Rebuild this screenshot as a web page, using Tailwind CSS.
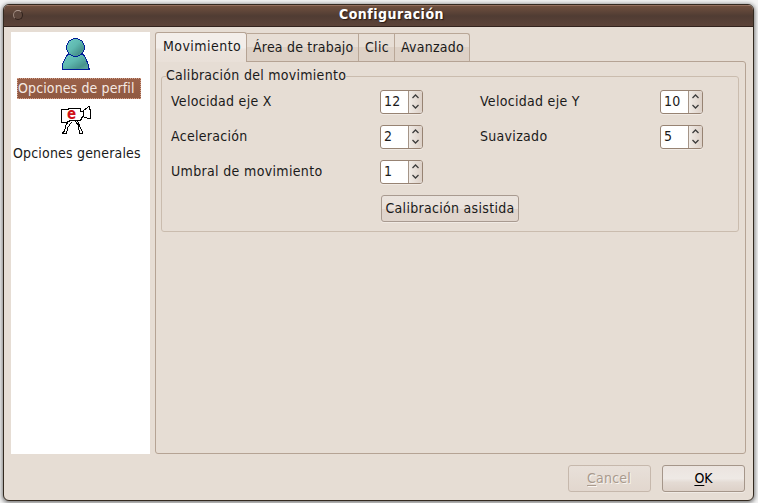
<!DOCTYPE html>
<html lang="es">
<head>
<meta charset="utf-8">
<title>Configuración</title>
<script src="https://cdn.jsdelivr.net/npm/@tailwindcss/browser@4"></script>
</head>
<body class="w-[758px] h-[503px] overflow-hidden bg-[#f4f4f4] pt-1 pl-[3px] text-[14px] leading-[16px] text-[#1a1a1a] whitespace-nowrap [font-family:'DejaVu_Sans_Condensed','DejaVu_Sans',sans-serif] [font-stretch:condensed]">
<div class="w-[751px] h-[497px] flex flex-col rounded-[6px] border border-[#33291f] bg-[#e6ddd4] overflow-hidden shadow-[0_1px_4px_1px_rgba(0,0,0,0.5)]">
  <header class="h-[22px] shrink-0 flex items-center border-t border-t-[#94705f] border-b border-b-[#33231d] bg-linear-to-b from-[#70503f] via-[#503c33] to-[#5c4338] pl-[9px]">
    <span class="size-[10px] rounded-full border border-[#30221c] border-t-[#b09c92] border-l-[#9c877c] bg-[#5c463c] -translate-y-px"></span>
    <h1 class="w-[720px] h-[21px] pl-[17px] text-center text-white font-bold tracking-[0.48px] [text-shadow:1px_1px_1px_#2b1c15]">Configuración</h1>
  </header>
  <div class="flex pl-[7px] pt-[5px] gap-[5px] h-[428px] shrink-0">
    <nav class="w-[139px] h-[422px] bg-white flex flex-col">
      <svg class="ml-[51px] mt-[5px]" width="29" height="34" viewBox="0 0 29 34" shape-rendering="crispEdges">
        <defs><linearGradient id="g" x1="0" y1="0" x2="1" y2="1"><stop offset="0" stop-color="#70cbc3"/><stop offset=".45" stop-color="#5fb9b0"/><stop offset=".75" stop-color="#47938d"/><stop offset="1" stop-color="#64aca5"/></linearGradient></defs>
        <path d="M.5 32.500V27.500L3.500 20.500L7.500 15.500H19.500L23.500 20.500L26.500 28.500V31.500H27.500V32.500Z" fill="url(#g)" stroke="#001c98"/>
        <circle cx="13.500" cy="10.500" r="9" fill="url(#g)" stroke="#001c98"/>
      </svg>
      <div class="ml-[6px] mt-[7px] w-[124px] h-[21px] bg-linear-to-b from-[#9b6149] to-[#8f5942] border border-dotted border-[#d5a28c] text-[#f5e9e2] pt-px tracking-[0.12px]"><span>Opciones de perfil</span></div>
      <svg class="ml-[49px] mt-[5px]" width="32" height="32" viewBox="0 0 32 32" shape-rendering="crispEdges" fill="none" stroke="#000">
        <path d="M1.500 5.500H8.500V4.500H20.500V7.500H22.500L28.500 2.500H29.500V5.500H30.500V14.500H28.500L22.500 12.500L20.500 16.500H9.500V17.500H7.500V18.500H1.500Z"/>
        <path d="M23.500 7V12M8.500 17L5.500 22L4.500 27.500L2.500 28.500V29.500H6.500L7.500 24L11.500 18M15.500 17L18.500 22L19.500 29.500H22.500V27.500L20.500 24L17.500 17"/>
        <text x="7" y="15" fill="#d01018" stroke="none" class="text-[15px] font-bold">e</text>
      </svg>
      <span class="ml-[2px] mt-[9px] tracking-[0.18px]">Opciones generales</span>
    </nav>
    <main class="w-[591px]">
      <div class="flex items-end h-[29px]">
        <span class="w-[92px] h-[30px] relative z-10 -mb-px pl-[7px] pt-[5px] border border-b-0 border-[#b5a394] rounded-t-[3px] bg-[linear-gradient(#f3eeea_0_50%,#eae2db_60%,#e9e0d8)] tracking-[0.45px]">Movimiento</span>
        <span class="w-[112px] h-[28px] pl-[6px] pt-[5px] border-t border-r border-[#b9a797] bg-[linear-gradient(#e7ded5_0_50%,#ddd1c6_50%)] tracking-[0.2px]">Área de trabajo</span>
        <span class="w-[36px] h-[28px] pl-[6px] pt-[5px] border-t border-r border-[#b9a797] bg-[linear-gradient(#e7ded5_0_50%,#ddd1c6_50%)] tracking-[0.3px]">Clic</span>
        <span class="w-[75px] h-[28px] pl-[6px] pt-[5px] border-t border-r border-[#b9a797] rounded-tr-[3px] bg-[linear-gradient(#e7ded5_0_50%,#ddd1c6_50%)] tracking-[0.25px]">Avanzado</span>
      </div>
      <section class="w-[591px] h-[393px] border border-[#b5a394] rounded-b-[3px] rounded-tr-[3px] pl-[5px] pt-[5px]">
        <h2 class="h-[9px] pl-[5px] tracking-[0.28px]"><span class="relative z-10 bg-[#e6ddd4]">Calibración del movimiento</span></h2>
        <div class="w-[578px] h-[156px] border border-[#cabcae] rounded-[3px] pl-[9px] pt-[13px]">
          <div class="grid grid-cols-[209px_100px_180px_43px] gap-y-[11px] items-center [&>span]:-mt-[2px] tracking-[0.3px]">
            <span>Velocidad eje X</span>
            <div class="w-[43px] h-[24px] flex rounded-[3px] border border-[#978373] bg-white shadow-[0_1px_0_#f0eae4]"><span class="w-[28px] pl-[3px] pt-[2px]">12</span><i class="w-[14px] h-[22px] border-l border-[#a59588] bg-linear-to-r from-[#f0ebe6] to-[#dcd0c7] rounded-r-[2px]"><svg width="13" height="22" viewBox="0 0 13 22" fill="none" stroke="#3c3c3c" stroke-width="1.300"><path d="M3.500 7L6.500 4L9.500 7M3.500 14L6.500 17L9.500 14"/></svg></i></div>
            <span>Velocidad eje Y</span>
            <div class="w-[43px] h-[24px] flex rounded-[3px] border border-[#978373] bg-white shadow-[0_1px_0_#f0eae4]"><span class="w-[28px] pl-[3px] pt-[2px]">10</span><i class="w-[14px] h-[22px] border-l border-[#a59588] bg-linear-to-r from-[#f0ebe6] to-[#dcd0c7] rounded-r-[2px]"><svg width="13" height="22" viewBox="0 0 13 22" fill="none" stroke="#3c3c3c" stroke-width="1.300"><path d="M3.500 7L6.500 4L9.500 7M3.500 14L6.500 17L9.500 14"/></svg></i></div>
            <span>Aceleración</span>
            <div class="w-[43px] h-[24px] flex rounded-[3px] border border-[#978373] bg-white shadow-[0_1px_0_#f0eae4]"><span class="w-[28px] pl-[3px] pt-[2px]">2</span><i class="w-[14px] h-[22px] border-l border-[#a59588] bg-linear-to-r from-[#f0ebe6] to-[#dcd0c7] rounded-r-[2px]"><svg width="13" height="22" viewBox="0 0 13 22" fill="none" stroke="#3c3c3c" stroke-width="1.300"><path d="M3.500 7L6.500 4L9.500 7M3.500 14L6.500 17L9.500 14"/></svg></i></div>
            <span>Suavizado</span>
            <div class="w-[43px] h-[24px] flex rounded-[3px] border border-[#978373] bg-white shadow-[0_1px_0_#f0eae4]"><span class="w-[28px] pl-[3px] pt-[2px]">5</span><i class="w-[14px] h-[22px] border-l border-[#a59588] bg-linear-to-r from-[#f0ebe6] to-[#dcd0c7] rounded-r-[2px]"><svg width="13" height="22" viewBox="0 0 13 22" fill="none" stroke="#3c3c3c" stroke-width="1.300"><path d="M3.500 7L6.500 4L9.500 7M3.500 14L6.500 17L9.500 14"/></svg></i></div>
            <span class="tracking-[0.34px]">Umbral de movimiento</span>
            <div class="w-[43px] h-[24px] flex rounded-[3px] border border-[#978373] bg-white shadow-[0_1px_0_#f0eae4]"><span class="w-[28px] pl-[3px] pt-[2px]">1</span><i class="w-[14px] h-[22px] border-l border-[#a59588] bg-linear-to-r from-[#f0ebe6] to-[#dcd0c7] rounded-r-[2px]"><svg width="13" height="22" viewBox="0 0 13 22" fill="none" stroke="#3c3c3c" stroke-width="1.300"><path d="M3.500 7L6.500 4L9.500 7M3.500 14L6.500 17L9.500 14"/></svg></i></div>
          </div>
          <button class="ml-[210px] mt-[11px] w-[138px] h-[27px] pb-px tracking-[0.3px] rounded-[3px] border border-[#a89a90] bg-[linear-gradient(#eae3dd,#e9e1db_50%,#dfd4cc_51%,#e0d5cc)] shadow-[0_1px_0_#f0eae4]">Calibración asistida</button>
        </div>
      </section>
    </main>
  </div>
  <footer class="flex gap-[11px] pl-[564px] pt-[10px]">
    <button class="w-[83px] h-[27px] pr-px pb-[2px] tracking-[0.2px] rounded-[3px] border border-[#c6b8ac] bg-linear-to-b from-[#e8e0d9] to-[#e2d7ce] text-[#a99a8d] [text-shadow:1px_1px_0_#f8f4f0]"><u class="underline-offset-2">C</u>ancel</button>
    <button class="w-[83px] h-[27px] pb-[2px] rounded-[3px] border border-[#a5968a] bg-[linear-gradient(#ebe4df,#eee9e5_50%,#e4dbd4_65%,#ddd1c8)] shadow-[0_1px_0_#f0eae4] text-black"><u class="underline-offset-2">O</u>K</button>
  </footer>
</div>
</body>
</html>
